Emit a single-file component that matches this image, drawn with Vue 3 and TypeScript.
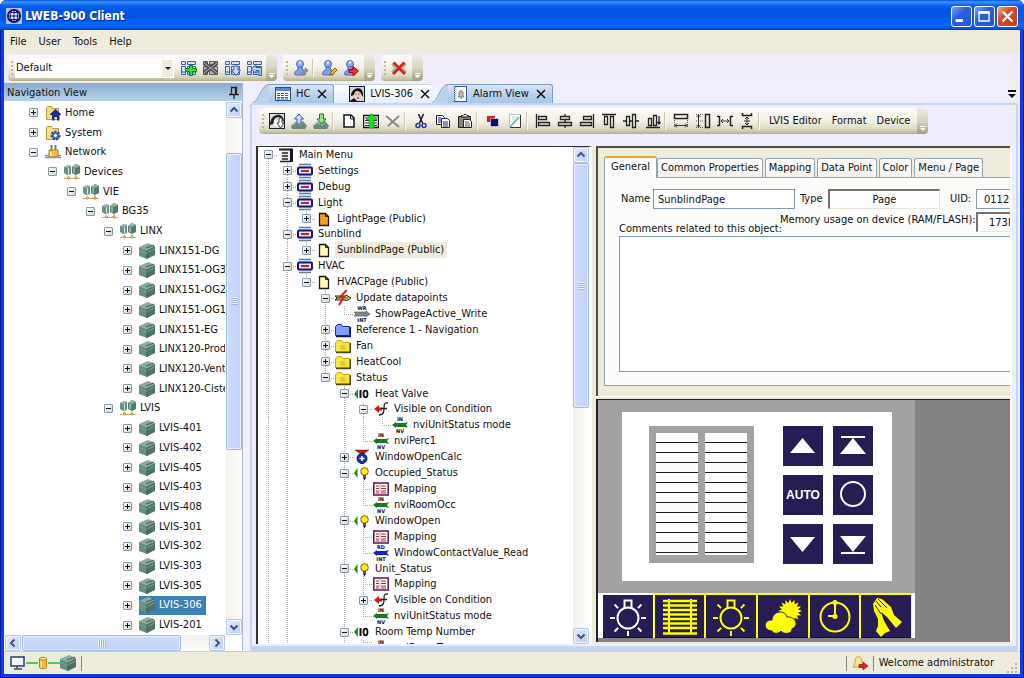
<script setup lang="ts">
interface TreeItem {
  level: number
  label: string
  icon: string
  open?: boolean
  leaf?: boolean
  selected?: boolean
}

interface Guide {
  top: boolean
  bottom: boolean
}

const menus: string[] = ['File', 'User', 'Tools', 'Help']

const layoutTools: string[][] = [
  ['grid-add', 'Add layout'],
  ['grid-del', 'Delete layout'],
  ['grid-down', 'Save layout'],
  ['grid-undo', 'Reset layout'],
]

const editorTools: string[][][] = [
  [['face-down', 'Load project'], ['upload', 'Upload'], ['download', 'Download']],
  [['page', 'New'], ['page-up', 'Insert'], ['cross-grey', 'Delete']],
  [['cut', 'Cut'], ['copy', 'Copy'], ['paste', 'Paste']],
  [['order', 'Order'], ['sheet', 'Sheet']],
  [
    ['al-left', 'Align left'], ['al-center', 'Align center'], ['al-right', 'Align right'],
    ['al-top', 'Align top'], ['al-middle', 'Align middle'], ['al-bottom', 'Align bottom'],
  ],
  [['same-w', 'Same width'], ['same-h', 'Same height'], ['space-h', 'Space across'], ['space-v', 'Space down']],
]

const editorMenus: string[] = ['LVIS Editor', 'Format', 'Device']

const dev = (label: string, selected = false): TreeItem => ({ level: 5, label, icon: 'cube', selected })

const navItems: TreeItem[] = [
  { level: 0, label: 'Home', icon: 'home' },
  { level: 0, label: 'System', icon: 'system' },
  { level: 0, label: 'Network', icon: 'network', open: true },
  { level: 1, label: 'Devices', icon: 'group', open: true },
  { level: 2, label: 'VIE', icon: 'group', open: true },
  { level: 3, label: 'BG35', icon: 'group', open: true },
  { level: 4, label: 'LINX', icon: 'group', open: true },
  dev('LINX151-DG'), dev('LINX151-OG3'), dev('LINX151-OG2'), dev('LINX151-OG1'), dev('LINX151-EG'),
  dev('LINX120-Production'), dev('LINX120-Ventilation'), dev('LINX120-Cistern'),
  { level: 4, label: 'LVIS', icon: 'group', open: true },
  dev('LVIS-401'), dev('LVIS-402'), dev('LVIS-405'), dev('LVIS-403'), dev('LVIS-408'),
  dev('LVIS-301'), dev('LVIS-302'), dev('LVIS-303'), dev('LVIS-305'), dev('LVIS-306', true), dev('LVIS-201'),
]

const projectItems: TreeItem[] = [
  { level: 0, label: 'Main Menu', icon: 'mainmenu', open: true },
  { level: 1, label: 'Settings', icon: 'menu' },
  { level: 1, label: 'Debug', icon: 'menu' },
  { level: 1, label: 'Light', icon: 'menu', open: true },
  { level: 2, label: 'LightPage (Public)', icon: 'page-orange' },
  { level: 1, label: 'Sunblind', icon: 'menu', open: true },
  { level: 2, label: 'SunblindPage (Public)', icon: 'page-yellow', selected: true },
  { level: 1, label: 'HVAC', icon: 'menu', open: true },
  { level: 2, label: 'HVACPage (Public)', icon: 'page-yellow', open: true },
  { level: 3, label: 'Update datapoints', icon: 'update', open: true },
  { level: 4, label: 'ShowPageActive_Write', icon: 'wr', leaf: true },
  { level: 3, label: 'Reference 1 - Navigation', icon: 'folder-blue' },
  { level: 3, label: 'Fan', icon: 'folder' },
  { level: 3, label: 'HeatCool', icon: 'folder' },
  { level: 3, label: 'Status', icon: 'folder', open: true },
  { level: 4, label: 'Heat Valve', icon: 'io', open: true },
  { level: 5, label: 'Visible on Condition', icon: 'cond', open: true },
  { level: 6, label: 'nviUnitStatus mode', icon: 'nv', leaf: true },
  { level: 5, label: 'nviPerc1', icon: 'nv', leaf: true },
  { level: 4, label: 'WindowOpenCalc', icon: 'calc' },
  { level: 4, label: 'Occupied_Status', icon: 'bulb', open: true },
  { level: 5, label: 'Mapping', icon: 'map', leaf: true },
  { level: 5, label: 'nviRoomOcc', icon: 'nv', leaf: true },
  { level: 4, label: 'WindowOpen', icon: 'bulb', open: true },
  { level: 5, label: 'Mapping', icon: 'map', leaf: true },
  { level: 5, label: 'WindowContactValue_Read', icon: 'rd', leaf: true },
  { level: 4, label: 'Unit_Status', icon: 'bulb', open: true },
  { level: 5, label: 'Mapping', icon: 'map', leaf: true },
  { level: 5, label: 'Visible on Condition', icon: 'cond' },
  { level: 5, label: 'nviUnitStatus mode', icon: 'nv', leaf: true },
  { level: 4, label: 'Room Temp Number', icon: 'io', open: true },
  { level: 5, label: 'nviRoomTemp', icon: 'nv', leaf: true },
]

// Levels whose branch goes on below the last loaded row.
const openEnded = [0, 1, 4, 5]

function continues(row: number, level: number): boolean {
  for (let i = row + 1; i < projectItems.length; i++) {
    if (projectItems[i].level === level) return true
    if (projectItems[i].level < level) return false
  }
  return openEnded.includes(level)
}

const projectRows = projectItems.map((item, row) => {
  const guides: Guide[] = []
  for (let level = 0; level <= item.level; level++) {
    const on = continues(row, level)
    guides.push(level === item.level ? { top: row > 0, bottom: on } : { top: on, bottom: on })
  }
  return { ...item, guides }
})

const pageTabs: string[] = ['General', 'Common Properties', 'Mapping', 'Data Point', 'Color', 'Menu / Page']
const keys: string[] = ['up', 'top', 'auto', 'circle', 'down', 'bottom']
const modes: string[] = ['lamp', 'blinds', 'lamp', 'weather', 'clock', 'hands']
const slats = Array.from({ length: 12 }, (_, i) => 16 + i * 10)
const rays = [45, 135, 225, 315]
const sunRays = Array.from({ length: 16 }, (_, i) => i * 22.5)
</script>

<template>
  <div class="window">
    <svg class="defs" aria-hidden="true">
      <symbol id="globe" viewBox="0 0 16 16"><rect width="16" height="16" fill="#b9b9d8" /><circle cx="8" cy="8" r="6" fill="#fff" stroke="#10107e" stroke-width="2" /><path d="M8 1v14M1 8h14M2.500 4.500h11M2.500 11.500h11" stroke="#10107e" /><ellipse cx="8" cy="8" rx="3.500" ry="6.500" fill="none" stroke="#10107e" /></symbol>
      <symbol id="grid" viewBox="0 0 16 16"><path d="M.5 1.500h4v3h-4zM6.500 1.500h8v3h-8zM.5 6.500h4v8h-4zM6.500 6.500h8v8h-8z" fill="#d5e3fa" stroke="#3d5fa8" /><path d="M1 12h3M7 12h7" stroke="#7b98d4" stroke-width="2" /></symbol>
      <symbol id="grid-add" viewBox="0 0 16 16"><use href="#grid" /><path d="M8.500 5.500h3v3h4v3h-4v4h-3v-4h-4v-3h4z" fill="#37dc37" stroke="#0b7d13" /></symbol>
      <symbol id="grid-del" viewBox="0 0 16 16"><path d="M.5 1.500h4v3h-4zM6.500 1.500h8v3h-8zM.5 6.500h4v8h-4zM6.500 6.500h8v8h-8z" fill="#bbb" stroke="#555" /><path d="M1 3l13 10M14 3L1 13" stroke="#444" stroke-width="4" /><path d="M1 3l13 10M14 3L1 13" stroke="#999" stroke-width="1.500" /></symbol>
      <symbol id="grid-down" viewBox="0 0 16 16"><use href="#grid" /><path d="M9 6h4v4h2.500L11 15.500 6.500 10H9z" fill="#c5d9ff" stroke="#3d5fa8" /></symbol>
      <symbol id="grid-undo" viewBox="0 0 16 16"><use href="#grid" /><path d="M4.500 9L9 5v2.500h5.500v8H12v-5H9v3z" fill="#b8cefa" stroke="#3d5fa8" /></symbol>
      <symbol id="person" viewBox="0 0 16 16"><circle cx="7" cy="4" r="3.500" fill="#8eacf0" stroke="#4a68b8" /><path d="M5 7h4l1 3c3 1 3 3 2 5H2c-1-3 0-4 3-5z" fill="#7f9fe8" stroke="#4a68b8" /><path d="M6 3l2-1" stroke="#dfe8ff" stroke-width="2" /></symbol>
      <symbol id="person-tool" viewBox="0 0 16 16"><use href="#person" /><path d="M8 15l6-6M12 8l1 2 2 1M8 13l2 2" stroke="#858c98" stroke-width="2" fill="none" /></symbol>
      <symbol id="person-edit" viewBox="0 0 16 16"><use href="#person" /><path d="M9 15l1-3 4-4 2 2-4 4z" fill="#f3c43d" stroke="#7b5b10" /></symbol>
      <symbol id="person-out" viewBox="0 0 16 16"><use href="#person" /><path d="M6 9.500h4v-3l5.500 4.500L10 15.500v-3H6z" fill="#f23329" stroke="#a40000" /></symbol>
      <symbol id="alarm-x" viewBox="0 0 16 16"><path d="M1 4l3 4-3 4M15 4l-3 4 3 4" stroke="#8ccf8c" stroke-width="2" fill="none" /><path d="M2.500 2.500L14 14M13.500 2.500L2 14" stroke="#e0201b" stroke-width="3" /></symbol>
      <symbol id="face" viewBox="0 0 16 16"><rect x=".5" y=".5" width="15" height="15" fill="#cfd8e0" stroke="#14143c" /><path d="M2 10C2 1 14-1 14 8v3l-3-5-4-1-2 4z" fill="#120c0c" /><path d="M5 8l2-3 4 1 1 4-2 4H8l-3-3z" fill="#f2cdb6" /><path d="M6.500 8h1M9.500 8h1M8 12h2" stroke="#6b2020" /><path d="M1 15l4-3 3 3z" fill="#181414" /></symbol>
      <symbol id="face-down" viewBox="0 0 16 16"><rect x=".5" y=".5" width="15" height="15" fill="#ddd" stroke="#222" /><path d="M1 12C1 0 15-2 15 9l-5-5-4 1-2 6z" fill="#222" /><path d="M5 7h5v6H6z" fill="#fff" /><path d="M10 5h3v5h2l-3.500 5L8 10h2z" fill="#fff" stroke="#444" /></symbol>
      <symbol id="hill" viewBox="0 0 16 16"><path d="M0 13l4-4 5 1 3-2 4 5-2 3H1z" fill="#68877f" /><path d="M1 12l4-2 4 2 3-2" stroke="#a9c4bb" fill="none" /></symbol>
      <symbol id="upload" viewBox="0 0 16 16"><use href="#hill" /><path d="M6 11V6H3.500L8 1l4.500 5H10v5z" fill="#c9dcff" stroke="#3158ad" /></symbol>
      <symbol id="download" viewBox="0 0 16 16"><use href="#hill" /><path d="M6.500 1v5H4l4.500 5L13 6h-2.500V1z" fill="#8de67e" stroke="#137a17" /></symbol>
      <symbol id="page" viewBox="0 0 16 16"><path d="M3 2h7l3 3v9H3z" fill="#fff" stroke="#111" stroke-width="1.500" /><path d="M9.500 2v4H13" fill="none" stroke="#111" /></symbol>
      <symbol id="page-up" viewBox="0 0 16 16"><path d="M.5 2.500h15v12H.5z" fill="#fff" stroke="#111" stroke-width="1.500" /><path d="M2 5h12M2 7.500h12M2 10h12M2 12.500h12" stroke="#333" /><path d="M6 15V7H3L8.500.5 14 7h-3v8z" fill="#0fe31b" stroke="#067b0b" stroke-width=".5" /></symbol>
      <symbol id="cross-grey" viewBox="0 0 16 16"><path d="M1 3l13 11M14 3L3 13" stroke="#8d8d86" stroke-width="2" fill="none" /></symbol>
      <symbol id="cut" viewBox="0 0 16 16"><path d="M5.500 1l4 9M10.500 1l-4 9" stroke="#15152e" stroke-width="1.500" /><circle cx="5" cy="12.500" r="2" fill="none" stroke="#2a35a8" stroke-width="1.500" /><circle cx="11" cy="12.500" r="2" fill="none" stroke="#2a35a8" stroke-width="1.500" /></symbol>
      <symbol id="copy" viewBox="0 0 16 16"><path d="M1.500 2.500h6l2 2v7h-8z" fill="#fff" stroke="#222" /><path d="M6.500 5.500h6l2 2v7h-8z" fill="#fff" stroke="#1d1d84" /><path d="M3 5h3M3 7h3M3 9h3M8 9h5M8 11h5M8 13h5" stroke="#1d1d84" /></symbol>
      <symbol id="paste" viewBox="0 0 16 16"><path d="M1.500 3.500h12v11h-12z" fill="#85857a" stroke="#222" /><path d="M4.500 4V2.500H6l1-1h2l1 1h1.500V4z" fill="#eee" stroke="#222" /><path d="M6.500 6.500h6l2 2v6h-8z" fill="#fff" stroke="#222" /><path d="M8 9h4M8 11h5M8 13h5" stroke="#555" /></symbol>
      <symbol id="order" viewBox="0 0 16 16"><path d="M2 3h8v6H2z" fill="#d21b1b" /><path d="M5.500 5.500h8v8h-8z" fill="#0a0a70" stroke="#fff" stroke-width=".5" /></symbol>
      <symbol id="sheet" viewBox="0 0 16 16"><path d="M2.500 1.500h11v13h-11z" fill="#fdfdf6" stroke="#b8c4c0" /><path d="M13.500 2v12.500H3" fill="none" stroke="#333" /><path d="M3 14L12 4" stroke="#55b8a8" stroke-width="1.500" /><path d="M5 4h5M5 6h3" stroke="#b5d8d0" /></symbol>
      <symbol id="al-left" viewBox="0 0 16 16"><path d="M1.500 1v14M3.500 3.500h8v3h-8zM3.500 9.500h11v3h-11z" fill="none" stroke="#222" stroke-width="1.300" /></symbol>
      <symbol id="al-center" viewBox="0 0 16 16"><path d="M8 1v2M8 7v2M8 13v2M3.500 3.500h9v3h-9zM1.500 9.500h13v3h-13z" fill="none" stroke="#222" stroke-width="1.300" /></symbol>
      <symbol id="al-right" viewBox="0 0 16 16"><path d="M14.500 1v14M4.500 3.500h8v3h-8zM1.500 9.500h11v3h-11z" fill="none" stroke="#222" stroke-width="1.300" /></symbol>
      <symbol id="al-top" viewBox="0 0 16 16"><path d="M1 1.500h14M3.500 3.500h3v8h-3zM9.500 3.500h3v11h-3z" fill="none" stroke="#222" stroke-width="1.300" /></symbol>
      <symbol id="al-middle" viewBox="0 0 16 16"><path d="M0 8h3M7 8h2M13 8h3M3.500 3.500h3v9h-3zM9.500 1.500h3v13h-3z" fill="none" stroke="#222" stroke-width="1.300" /></symbol>
      <symbol id="al-bottom" viewBox="0 0 16 16"><path d="M1 14.500h14M3.500 5.500h3v7h-3zM8.500 2.500h3v10h-3zM14 3v8M12.500 9l1.500 2 1.500-2" fill="none" stroke="#222" stroke-width="1.300" /></symbol>
      <symbol id="same-w" viewBox="0 0 16 16"><path d="M1.500 1.500h13v4h-13z" fill="none" stroke="#222" stroke-width="1.500" /><path d="M1.500 7v7M14.500 7v7" stroke="#555" stroke-dasharray="1 1" /><path d="M2 12.500h12M4 10.500l-2 2 2 2M12 10.500l2 2-2 2" stroke="#333" fill="none" /></symbol>
      <symbol id="same-h" viewBox="0 0 16 16"><path d="M10.500 1.500h4v13h-4z" fill="none" stroke="#222" stroke-width="1.500" /><path d="M1 1.500h8M1 14.500h8M1 8h7" stroke="#555" stroke-dasharray="1 1" /><path d="M3.500 2v12M1.500 4l2-2 2 2M1.500 12l2 2 2-2" stroke="#333" fill="none" /></symbol>
      <symbol id="space-h" viewBox="0 0 16 16"><path d="M0 3.500h2.500v9H0M16 3.500h-2.500v9H16" stroke="#222" stroke-width="1.500" fill="none" /><path d="M4 8h8M6 6L4 8l2 2M10 6l2 2-2 2" stroke="#333" fill="none" /></symbol>
      <symbol id="space-v" viewBox="0 0 16 16"><path d="M3.500 0v2.500h9V0M3.500 16v-2.500h9V16" stroke="#222" stroke-width="1.500" fill="none" /><path d="M8 4v8M6 6l2-2 2 2M6 10l2 2 2-2M5 8h6" stroke="#333" fill="none" /></symbol>
      <symbol id="table" viewBox="0 0 16 16"><rect x=".5" y="1.500" width="15" height="13" fill="#fff" stroke="#2b4a9b" /><path d="M1 2h14v3H1z" fill="#5b86dd" /><path d="M2 7.500h12M2 9.500h12M2 11.500h12M2 13h12" stroke="#3a54a0" stroke-dasharray="3 1" /></symbol>
      <symbol id="alarm" viewBox="0 0 16 16"><rect x="2.500" y=".5" width="12" height="15" fill="#f5f8ff" stroke="#3b5a9c" /><path d="M3 1v14" stroke="#e6b944" stroke-width="3" stroke-dasharray="1 1" /><path d="M6 11c1-1 1-2 1-4 0-3 4-3 4 0 0 2 0 3 1 4zM8 12h2" fill="#c3b7ae" stroke="#8b7b74" /></symbol>
      <symbol id="pin" viewBox="0 0 16 16"><path d="M5.500 9.500v-7h5v7M3 9.500h10M8 10v4M9.500 3v6" fill="none" stroke="#222" stroke-width="1.300" /></symbol>
      <symbol id="home" viewBox="0 0 16 16"><path d="M1.500 14.500v-12l1-1h4l1 2h6v11z" fill="#f5e07f" stroke="#b99b3b" /><path d="M5 9l5.500-5L16 9v1h-1.500v5.500H12V12H9.500v3.500H7V10H5z" fill="#1f2f86" /></symbol>
      <symbol id="system" viewBox="0 0 16 16"><path d="M1.500 14.500v-12l1-1h4l1 2h6v11z" fill="#f5e07f" stroke="#b99b3b" /><circle cx="10.500" cy="10.500" r="3.500" fill="#7d9ae8" stroke="#2c49a8" stroke-width="3" stroke-dasharray="2 1" /><circle cx="10.500" cy="10.500" r="2" fill="#fff" stroke="#3858b8" /></symbol>
      <symbol id="network" viewBox="0 0 16 16"><path d="M6.500 1v6M10.500 1v6" stroke="#7a7d88" stroke-width="2" /><path d="M4 6h9v7H4z" fill="#f5bf3c" stroke="#a97716" /><path d="M0 11.500h4M13 11.500h3M0 13.500h16" stroke="#8792a5" stroke-width="1.500" /><path d="M6 8v4" stroke="#ffeb9d" stroke-width="2" /></symbol>
      <symbol id="cube" viewBox="0 0 16 16"><path d="M0 4l9-4 7 3-8 4z" fill="#8aa99f" /><path d="M8 7l8-4v9l-8 4z" fill="#4f7367" /><path d="M0 4l8 3v9l-8-3z" fill="#668d81" /><path d="M7 5l8-3M8 8v8" stroke="#3b5b51" /><path d="M8.500 9.500l7-3.500" stroke="#7d9f94" /><path d="M0 7.500l8 3" stroke="#7b9f93" /></symbol>
      <symbol id="group" viewBox="0 0 16 16"><path d="M0 3l4-2 3 1v8l-4 1-3-2z" fill="#6a9284" /><path d="M0 3l4-2 3 1-4 2z" fill="#a0beb3" /><path d="M8 3l4-3 4 2v7l-4 2-4-2z" fill="#507a6c" /><path d="M8 3l4-3 4 2-4 2z" fill="#8fb1a6" /><path d="M4.500 4v6M10 4v5" stroke="#cfe5dc" /><path d="M0 14.500h16M4.500 12v3M12 11v4" stroke="#c8a86c" /><circle cx="4.500" cy="14" r="1.200" fill="#f4dc95" stroke="#b98f47" /><circle cx="12" cy="14" r="1.200" fill="#f4dc95" stroke="#b98f47" /></symbol>
      <symbol id="mainmenu" viewBox="0 0 16 16"><path d="M3 1h9v13H3z" fill="#ececec" /><path d="M1 2.500h14" stroke="#222" stroke-width="2" /><path d="M4 6h6M4 9h6M4 12h6M2 14.500h10" stroke="#222" stroke-width="1.500" /><path d="M12 3h3v12h-3z" fill="#14142f" /></symbol>
      <symbol id="menu" viewBox="0 0 16 16"><path d="M2 0h12v16H2z" fill="#c9d8ee" /><path d="M2 1.500h12M2 14.500h12" stroke="#777b85" /><rect x="1" y="4.500" width="14" height="7" rx="1" fill="#e4e6f8" stroke="#18186e" stroke-width="2" /><path d="M4 8h8" stroke="#cf1c1c" stroke-width="2" /></symbol>
      <symbol id="page-orange" viewBox="0 0 16 16"><path d="M3.500 2.500h6l3 3v9h-9z" fill="#ff9c1a" stroke="#221100" stroke-width="1.300" /><path d="M9.500 2.500v3h3" fill="none" stroke="#221100" /></symbol>
      <symbol id="page-yellow" viewBox="0 0 16 16"><path d="M3.500 2.500h6l3 3v9h-9z" fill="#fdf9b0" stroke="#1a1a1a" stroke-width="1.300" /><path d="M9.500 2.500v3h3" fill="none" stroke="#1a1a1a" /></symbol>
      <symbol id="update" viewBox="0 0 16 16"><path d="M0 6l2 2-2 2h11v1l5-3-5-3v1z" fill="#d6e22c" stroke="#222" /><path d="M2 8h11" stroke="#555" /><path d="M12 0L5 7h4l-5 8" fill="none" stroke="#dc1c1c" stroke-width="2" /></symbol>
      <symbol id="arrow-in" viewBox="0 0 16 16"><path d="M0 8l4-3v1h9l3-1-2 3 2 3-3-1H4v1z" /></symbol>
      <symbol id="nv" viewBox="0 0 16 16" overflow="visible"><use href="#arrow-in" fill="#157a1d" /><text x="8" y="4" class="tiny">IN</text><text x="8" y="16" class="tiny">NV</text></symbol>
      <symbol id="rd" viewBox="0 0 16 16" overflow="visible"><use href="#arrow-in" fill="#1c1cc4" /><text x="8" y="4" class="tiny">RD</text><text x="8" y="16" class="tiny">INT</text></symbol>
      <symbol id="wr" viewBox="0 0 16 16" overflow="visible"><path d="M0 6l2 2-2 2h12v1l4-3-4-3v1z" fill="#85888a" stroke="#333" stroke-width=".5" /><text x="8" y="4" class="tiny">WR</text><text x="8" y="16" class="tiny">INT</text></symbol>
      <symbol id="folder-blue" viewBox="0 0 16 16"><path d="M.5 13.500v-9l2-2h4l1 2h7v9z" fill="#7aa2fb" stroke="#2626a2" /><path d="M1 14.500h14.500V5" stroke="#14145e" fill="none" stroke-width="1.500" /></symbol>
      <symbol id="folder" viewBox="0 0 16 16"><path d="M.5 13.500v-9l2-2h4l1 2h7v9z" fill="#f7e448" stroke="#c1aa00" /><circle cx="8" cy="9.500" r="3" fill="#f2c83a" /><path d="M1 14.500h14.500V5" stroke="#4c4400" fill="none" stroke-width="1.500" /></symbol>
      <symbol id="io" viewBox="0 0 16 16"><path d="M4 3v10L0 8z" fill="#1f8a2a" /><path d="M6.500 4v8" stroke="#111" stroke-width="2" /><ellipse cx="11.500" cy="8" rx="2" ry="3.300" fill="none" stroke="#111" stroke-width="1.800" /></symbol>
      <symbol id="bulb" viewBox="0 0 16 16"><path d="M3.500 3v10L0 8z" fill="#1f8a2a" /><circle cx="10.500" cy="6.500" r="3.800" fill="#ffee16" stroke="#6e6200" /><path d="M9 11h3M9 13h3M10 14.500h1" stroke="#222" stroke-width="1.500" /></symbol>
      <symbol id="cond" viewBox="0 0 16 16"><path d="M1 8l5-4v2.500h3v3H6V12z" fill="#dc1111" /><path d="M15 2c-4-1-4 2-4 5s0 7-5 7M8 7.500h6" fill="none" stroke="#222" stroke-width="1.300" /></symbol>
      <symbol id="calc" viewBox="0 0 16 16"><path d="M1 1h14l-7 5z" fill="#c61818" stroke="#333" stroke-width=".5" /><circle cx="8" cy="9.500" r="5" fill="#1630ba" stroke="#0c0c5a" /><path d="M5.500 9.500h5M8 7v5" stroke="#fff" stroke-width="1.500" /></symbol>
      <symbol id="map" viewBox="0 0 16 16"><rect x=".8" y="2" width="14.400" height="12" fill="#fff" stroke="#5a1450" stroke-width="1.500" /><path d="M3 5h3M3 7.500h3M3 10h3M3 12h3M8 5h5M8 7.500h5M8 10h5M8 12h5" stroke="#b52234" /><path d="M7 3v10" stroke="#bbb" /></symbol>
      <symbol id="monitor" viewBox="0 0 16 16"><rect x="1" y="2" width="13" height="9" fill="#f4f8ff" stroke="#2a3a8c" stroke-width="1.500" /><path d="M7 11v2M4 14h8" stroke="#444" stroke-width="1.500" /></symbol>
      <symbol id="db" viewBox="0 0 10 16"><path d="M1 3v10c0 2 8 2 8 0V3z" fill="#f0bf31" stroke="#a77a12" /><ellipse cx="5" cy="3" rx="4" ry="1.500" fill="#fff0a6" stroke="#a77a12" /><path d="M3 6v7" stroke="#fff2b5" stroke-width="1.500" /></symbol>
      <symbol id="bell-out" viewBox="0 0 16 16"><path d="M1 12c2-2 2-4 2-6 0-6 7-6 7 0 0 2 0 4 2 6z" fill="#f8e49a" stroke="#c9a439" /><path d="M7 9.500h4V7l5 4-5 4v-2.500H7z" fill="#ee2020" stroke="#920000" stroke-width=".6" /></symbol>
      <symbol id="chev" viewBox="0 0 10 10"><path d="M1.500 6.500L5 3l3.500 3.500" fill="none" stroke="#3c5480" stroke-width="2" /></symbol>
    </svg>

    <header class="titlebar">
      <svg class="i16"><use href="#globe" /></svg>
      <h1>LWEB-900 Client</h1>
      <button class="cap-btn" aria-label="Minimize"><svg viewBox="0 0 21 21"><path d="M4 15h8" stroke="#fff" stroke-width="3" /></svg></button>
      <button class="cap-btn" aria-label="Maximize"><svg viewBox="0 0 21 21"><path d="M4.500 5.500h11v10h-11z" fill="none" stroke="#fff" stroke-width="1.500" /><path d="M4 6h12" stroke="#fff" stroke-width="3" /></svg></button>
      <button class="cap-btn close" aria-label="Close"><svg viewBox="0 0 21 21"><path d="M5 5l11 11M16 5L5 16" stroke="#fff" stroke-width="2.500" /></svg></button>
    </header>

    <div class="client">
      <nav class="menubar">
        <button v-for="m in menus" :key="m">{{ m }}</button>
      </nav>

      <div class="toolbars">
        <div class="toolbar layout-bar">
          <span class="grip"></span>
          <div class="combo">
            <select aria-label="Layout"><option>Default</option></select>
            <span class="combo-arrow"></span>
          </div>
          <button v-for="t in layoutTools" :key="t[0]" class="tool" :aria-label="t[1]"><svg class="i16"><use :href="'#' + t[0]" /></svg></button>
          <span class="cap"></span>
        </div>
        <div class="toolbar">
          <span class="grip"></span>
          <button class="tool" aria-label="User settings"><svg class="i16"><use href="#person-tool" /></svg></button>
          <span class="sep"></span>
          <button class="tool" aria-label="Edit user"><svg class="i16"><use href="#person-edit" /></svg></button>
          <button class="tool" aria-label="Log out"><svg class="i16"><use href="#person-out" /></svg></button>
          <span class="cap"></span>
        </div>
        <div class="toolbar">
          <span class="grip"></span>
          <button class="tool" aria-label="Disconnect"><svg class="i16"><use href="#alarm-x" /></svg></button>
          <span class="cap"></span>
        </div>
      </div>

      <main class="main">
        <aside class="nav">
          <div class="nav-head"><h2>Navigation View</h2><button aria-label="Pin"><svg class="i16"><use href="#pin" /></svg></button></div>
          <div class="nav-body">
            <ul class="nav-tree">
              <li v-for="n in navItems" :key="n.label" :class="'lv' + n.level">
                <button class="exp" :aria-label="n.open ? 'Collapse' : 'Expand'"><i></i><i v-if="!n.open" class="vert"></i></button>
                <span class="nav-item" :class="{ sel: n.selected }"><svg class="i16"><use :href="'#' + n.icon" /></svg><span class="nav-label">{{ n.label }}</span></span>
              </li>
            </ul>
            <div class="vbar">
              <button aria-label="Scroll up"><svg><use href="#chev" /></svg></button>
              <span class="gap-a"></span><span class="thumb thumb-a"></span><span class="gap-b"></span>
              <button class="flip" aria-label="Scroll down"><svg><use href="#chev" /></svg></button>
            </div>
          </div>
          <div class="hbar">
            <button class="turn-left" aria-label="Scroll left"><svg><use href="#chev" /></svg></button>
            <span class="thumb"></span><span class="gap-h"></span>
            <button class="turn-right" aria-label="Scroll right"><svg><use href="#chev" /></svg></button>
          </div>
        </aside>

        <section class="docs">
          <div class="doc-tabs">
            <button class="doc-tab">
              <svg class="slant" viewBox="0 0 16 19"><path d="M0 19C6 19 9 .5 16 .5V19z" fill="#bcd2ec" /><path d="M0 18.500C6 18 8 .5 16 .5" fill="none" stroke="#7f9cc0" /></svg>
              <span class="doc-face hc"><svg class="i16"><use href="#table" /></svg><span>HC</span><svg class="x" viewBox="0 0 10 10"><path d="M1 1l8 8M9 1L1 9" /></svg></span>
            </button>
            <button class="doc-tab active">
              <span class="doc-face lv"><svg class="i16"><use href="#face" /></svg><span>LVIS-306</span><svg class="x" viewBox="0 0 10 10"><path d="M1 1l8 8M9 1L1 9" /></svg></span>
            </button>
            <button class="doc-tab">
              <svg class="slant on-active" viewBox="0 0 16 19"><path d="M0 19C6 19 9 .5 16 .5V19z" fill="#bcd2ec" /><path d="M0 18.500C6 18 8 .5 16 .5" fill="none" stroke="#7f9cc0" /></svg>
              <span class="doc-face av"><svg class="i16"><use href="#alarm" /></svg><span>Alarm View</span><svg class="x" viewBox="0 0 10 10"><path d="M1 1l8 8M9 1L1 9" /></svg></span>
            </button>
            <button class="tab-list" aria-label="Tab list"><svg viewBox="0 0 8 8"><path d="M0 1h8" stroke="#111" stroke-width="2" /><path d="M0 4h8L4 8z" fill="#111" /></svg></button>
          </div>

          <div class="frame">
            <div class="toolbar editor-bar">
              <span class="grip"></span>
              <template v-for="(g, gi) in editorTools" :key="gi">
                <button v-for="t in g" :key="t[0]" class="tool" :aria-label="t[1]"><svg class="i16"><use :href="'#' + t[0]" /></svg></button>
                <span class="sep"></span>
              </template>
              <button v-for="m in editorMenus" :key="m" class="text-tool">{{ m }}</button>
              <span class="cap"></span>
            </div>

            <div class="split">
              <div class="project">
                <ul class="project-tree">
                  <li v-for="(r, ri) in projectRows" :key="ri">
                    <span v-for="(g, k) in r.guides" :key="k" class="guide" :class="{ gt: g.top, gb: g.bottom, gh: k === r.level }">
                      <button v-if="k === r.level && !r.leaf" class="exp" :aria-label="r.open ? 'Collapse' : 'Expand'"><i></i><i v-if="!r.open" class="vert"></i></button>
                    </span>
                    <svg class="i16 node-icon"><use :href="'#' + r.icon" /></svg>
                    <span class="project-label" :class="{ sel: r.selected }">{{ r.label }}</span>
                  </li>
                </ul>
                <div class="vbar">
                  <button aria-label="Scroll up"><svg><use href="#chev" /></svg></button>
                  <span class="thumb thumb-p"></span><span class="gap-p"></span>
                  <button class="flip" aria-label="Scroll down"><svg><use href="#chev" /></svg></button>
                </div>
              </div>

              <div class="workspace">
                <div class="props">
                  <div class="page-tabs">
                    <button v-for="(t, ti) in pageTabs" :key="t" :class="{ on: ti === 0 }">{{ t }}</button>
                  </div>
                  <div class="page-body">
                    <div class="line">
                      <label class="l-name" for="f-name">Name</label><input id="f-name" class="f-name" value="SunblindPage">
                      <label class="l-type" for="f-type">Type</label><input id="f-type" class="f-type sunk" value="Page" readonly>
                      <label class="l-uid" for="f-uid">UID:</label><input id="f-uid" class="f-cut" value="011200">
                    </div>
                    <div class="line second">
                      <label class="l-com" for="f-com">Comments related to this object:</label>
                      <label class="l-mem" for="f-mem">Memory usage on device (RAM/FLASH):</label><input id="f-mem" class="f-cut sunk mem" value="173kB" readonly>
                    </div>
                    <textarea id="f-com"></textarea>
                  </div>
                </div>

                <div class="preview">
                  <div class="device">
                    <div class="screen">
                      <svg class="blind" viewBox="0 0 105 137">
                        <rect width="105" height="137" fill="#a2a2a2" />
                        <path d="M7 7h42v122H7zM56 7h42v122H56z" fill="#fdfcfa" />
                        <path v-for="y in slats" :key="y" :d="`M7 ${y + 0.5}h42M56 ${y + 0.5}h42`" stroke="#1c1c1c" />
                      </svg>
                      <div class="keys">
                        <button v-for="k in keys" :key="k" :aria-label="k">
                          <span v-if="k === 'auto'">AUTO</span>
                          <svg v-else viewBox="0 0 40 40">
                            <path v-if="k === 'up'" d="M7 27h25L19.500 12z" fill="#fff" />
                            <path v-if="k === 'down'" d="M7 13h25L19.500 28z" fill="#fff" />
                            <g v-if="k === 'top'"><path d="M7 28h26L20 12z" fill="#fff" /><path d="M8 11h24" stroke="#fff" stroke-width="2" /></g>
                            <g v-if="k === 'bottom'"><path d="M7 12h26L20 28z" fill="#fff" /><path d="M8 29h24" stroke="#fff" stroke-width="2" /></g>
                            <circle v-if="k === 'circle'" cx="20" cy="19" r="12" fill="none" stroke="#fff" stroke-width="2" />
                          </svg>
                        </button>
                      </div>
                    </div>
                    <div class="modes">
                      <button v-for="(m, mi) in modes" :key="mi" :class="{ first: mi === 0 }" :aria-label="m">
                        <svg viewBox="0 0 48 42">
                          <g v-if="m === 'lamp'" fill="none" stroke="currentColor" stroke-width="2">
                            <circle cx="24" cy="22" r="10.500" /><path d="M20.500 12V4.500h7V12" />
                            <path v-for="a in rays" :key="a" d="M24 8V3" :transform="`rotate(${a} 24 22)`" />
                            <path d="M11 22H6M37 22h5M24 35v5" />
                          </g>
                          <g v-if="m === 'blinds'" stroke="currentColor">
                            <path d="M7 5h34M7 9.500h34M7 14h34M7 18.500h34M7 23h34M7 27.500h34M7 32h34M7 37.500h34" stroke-width="2.500" /><path d="M13 3v35M35 3v35" stroke-width="2" />
                          </g>
                          <g v-if="m === 'weather'" fill="currentColor">
                            <circle cx="31" cy="15" r="8" /><path v-for="a in sunRays" :key="a" d="M29 8l2-5 2 5z" :transform="`rotate(${a} 31 15)`" />
                            <path d="M13 35c-10-1-8-12 0-11 0-9 13-11 15-3 8-1 13 8 5 12 0 6-10 5-11 2-2 3-8 3-9 0z" stroke="#271c54" />
                          </g>
                          <g v-if="m === 'clock'" fill="none" stroke="currentColor" stroke-width="2">
                            <circle cx="24" cy="21" r="14.500" /><path d="M24 6v14h-7" /><circle cx="24" cy="6.500" r="1.500" fill="currentColor" /><circle cx="24" cy="20.500" r="1.500" fill="currentColor" />
                          </g>
                          <g v-if="m === 'hands'">
                            <path d="M11 8l4-6 5 1 9 8 3 8 8 7-6 6-9-11-6-5 3 9 6 10-5 2-4 4-5-6 2-5v-7l-4-8z" fill="currentColor" />
                            <path d="M14 5l5 6M16 3l9 9M13 9l6 9" stroke="#271c54" />
                          </g>
                        </svg>
                      </button>
                    </div>
                  </div>
                </div>
              </div>
            </div>
          </div>
        </section>
      </main>

      <footer class="status">
        <svg class="i16"><use href="#monitor" /></svg><span class="link"></span><svg class="db"><use href="#db" /></svg><span class="link"></span><svg class="i16"><use href="#cube" /></svg>
        <span class="bar"></span>
        <span class="bar push"></span><svg class="i16"><use href="#bell-out" /></svg><span class="bar"></span>
        <span class="welcome">Welcome administrator</span>
        <svg class="resize" viewBox="0 0 12 12"><path d="M9 1h2v2H9zM5 5h2v2H5zM9 5h2v2H9zM1 9h2v2H1zM5 9h2v2H5zM9 9h2v2H9z" fill="#b9b5a2" /></svg>
      </footer>
    </div>
  </div>
</template>

<style>
html,
body {
  height: 100%;
  margin: 0;
  overflow: hidden;
  background: #fff;
}
</style>

<style scoped>
.window {
  height: 100vh;
  display: flex;
  flex-direction: column;
  box-sizing: border-box;
  padding: 0 4px 4px;
  background: #0a3fdc;
  box-shadow: inset 1px 0 #0018a8, inset -1px 0 #00128c, inset 0 -1px #00128c;
  border-radius: 7px 7px 0 0;
  overflow: hidden;
  font: 11px/14px "DejaVu Sans Condensed", "DejaVu Sans", sans-serif;
  color: #111;
}
.window * { box-sizing: border-box; }
.defs { position: absolute; width: 0; height: 0; }
.tiny { font: bold 5px "DejaVu Sans", sans-serif; text-anchor: middle; fill: #111; }
.i16 { width: 16px; height: 16px; flex: none; display: block; }
.node-icon { overflow: visible; }
button { font: inherit; color: inherit; border: 0; padding: 0; margin: 0; background: none; flex: none; }
input, textarea, select { font: inherit; color: inherit; margin: 0; border-radius: 0; outline: 0; }
h1, h2, ul { margin: 0; padding: 0; list-style: none; }

.titlebar {
  height: 30px;
  flex: none;
  margin: 0 -4px;
  padding: 2px 6px 0 6px;
  display: flex;
  align-items: center;
  gap: 2px;
  background: linear-gradient(#0a50d0 0, #3d96ff 2px, #0b66f2 5px, #0055e5 9px, #0058ec 18px, #0369ff 26px, #0050d8 29px, #0036b8 30px);
}
.titlebar h1 { flex: 1; margin-left: 1px; font: bold 12px/16px "DejaVu Sans Condensed", "DejaVu Sans", sans-serif; color: #fff; text-shadow: 1px 1px #0a2a88; }
.cap-btn { width: 21px; height: 21px; border: 1px solid #fff; border-radius: 3px; background: linear-gradient(135deg, #7ba2f5, #2c5fe0 40%, #2357d8); }
.cap-btn svg { display: block; width: 19px; height: 19px; }
.close { background: linear-gradient(135deg, #f0a28a, #dc4a22 40%, #c83c14); }

.client { flex: 1; min-height: 0; display: flex; flex-direction: column; background: #f0eefd; }
.menubar { height: 24px; flex: none; display: flex; align-items: center; gap: 12px; padding: 0 6px; background: #eeebdd; }

.toolbars { height: 29px; flex: none; display: flex; align-items: flex-start; gap: 6px; padding: 1px 4px 0; background: #f0edf8; }
.toolbar {
  height: 26px;
  display: flex;
  align-items: center;
  border-radius: 4px;
  overflow: hidden;
  background: linear-gradient(#fbfaf7, #f2f0e6 50%, #dcd9c6 80%, #bdba96 97%, #a9a583);
}
.grip { width: 2px; height: 14px; margin: 0 2px 0 3px; background: repeating-linear-gradient(#bdb9a6 0 2px, transparent 2px 4px); }
.combo { width: 159px; height: 19px; display: flex; align-items: center; background: #fff; margin-right: 4px; }
.combo select { flex: 1; appearance: none; border: 0; background: none; padding: 0 1px; }
.combo-arrow { width: 11px; height: 17px; margin-right: 1px; background: #eeebdd; display: grid; place-items: center; }
.combo-arrow::before { content: ""; border: 3px solid transparent; border-top-color: #111; border-bottom: 0; }
.tool { width: 22px; height: 22px; display: grid; place-items: center; }
.sep { width: 6px; height: 18px; border-left: 1px solid #c8c5b2; background: linear-gradient(90deg, #fff 1px, transparent 1px); }
.cap { width: 11px; align-self: stretch; margin-left: 2px; flex: none; border-radius: 0 4px 4px 0; background: linear-gradient(#edebe0, #d6d4c2 50%, #a29f80); display: grid; place-items: end center; padding-bottom: 3px; }
.cap::before { content: ""; width: 6px; height: 5px; clip-path: polygon(0 0, 100% 0, 100% 20%, 0 20%, 0 40%, 100% 40%, 50% 100%, 0 40%); background: #fff; }
.layout-bar .cap { margin-left: 0; }

.main { flex: 1; min-height: 0; display: flex; }
.nav { width: 239px; flex: none; display: flex; flex-direction: column; background: #fff; border-right: 1px solid #a9b9d3; }
.nav-head { height: 18px; flex: none; display: flex; align-items: center; justify-content: space-between; padding: 2px 0 0 3px; background: linear-gradient(#89abcf, #a2bfdd 50%, #b7d0ec); }
.nav-head h2 { font: inherit; }
.nav-body { flex: 1; min-height: 0; display: flex; padding-top: 1px; }
.nav-tree { flex: 1; min-width: 0; display: flex; flex-direction: column; overflow: hidden; margin-right: 1px; padding: 1px 0 0 25px; }
.nav-tree li { flex: 1; min-height: 0; display: flex; align-items: center; gap: 7px; }
.lv1 { padding-left: 19px; }
.lv2 { padding-left: 38px; }
.lv3 { padding-left: 57px; }
.lv4 { padding-left: 75px; }
.lv5 { padding-left: 94px; }
.nav-item { display: flex; align-items: center; gap: 2px; height: 100%; padding-right: 4px; }
.nav-label { padding-left: 2px; white-space: nowrap; }
.nav-item.sel { background: #3d80b6; color: #fff; }

.exp { position: relative; width: 9px; height: 9px; border: 1px solid #8499b3; border-radius: 1px; background: linear-gradient(135deg, #fff, #d8d4c8); z-index: 1; }
.exp i { position: absolute; left: 1px; top: 3px; width: 5px; height: 1px; background: #111; }
.exp i.vert { left: 3px; top: 1px; width: 1px; height: 5px; }

.vbar { width: 16px; flex: none; display: flex; flex-direction: column; background: linear-gradient(90deg, #f2f1ec, #fdfdf9); }
.vbar button, .hbar button { width: 16px; height: 16px; display: grid; place-items: center; border: 1px solid #b3c6ec; border-radius: 2px; background: linear-gradient(135deg, #e3ecff, #b9ccf5); box-shadow: inset 0 0 0 1px #f2f6ff; }
.vbar svg, .hbar svg { width: 10px; height: 10px; }
.flip svg { transform: rotate(180deg); }
.turn-left svg { transform: rotate(-90deg); }
.turn-right svg { transform: rotate(90deg); }
.thumb { display: grid; place-items: center; border: 1px solid #9db8ec; border-radius: 2px; background: linear-gradient(90deg, #cfdcfd, #bfd0f8); box-shadow: inset 0 0 0 1px #e6eeff; }
.thumb::before { content: ""; width: 7px; height: 8px; background: repeating-linear-gradient(#eef4ff 0 1px, #9cb4e8 1px 2px); }
.gap-a { flex: 35; }
.thumb-a { flex: 296; }
.gap-b { flex: 170; }
.thumb-p { flex: 243; }
.gap-p { flex: 220; }
.hbar { height: 16px; flex: none; display: flex; padding-left: 1px; margin-right: 17px; background: linear-gradient(#f2f1ec, #fdfdf9); }
.hbar .thumb { flex: 160; margin-left: 1px; background: linear-gradient(#cfdcfd, #bfd0f8); }
.hbar .thumb::before { width: 8px; height: 7px; background: repeating-linear-gradient(90deg, #eef4ff 0 1px, #9cb4e8 1px 2px); }
.gap-h { flex: 28; }

.docs { flex: 1; min-width: 0; display: flex; flex-direction: column; padding: 1px 2px 0 7px; }
.doc-tabs { height: 19px; flex: none; display: flex; padding-left: 3px; }
.doc-tab { display: flex; }
.slant { width: 16px; height: 19px; display: block; }
.on-active { background: linear-gradient(90deg, #f0f5fd, transparent); }
.doc-face { height: 19px; display: flex; align-items: center; gap: 5px; padding: 0 6px; border-top: 1px solid #7f9cc0; border-right: 1px solid #7f9cc0; border-radius: 0 3px 0 0; background: linear-gradient(#d9e6f6, #bcd2ec 50%, #a9c5e6); }
.active .doc-face { padding: 0 2px 0 15px; border-color: #c3d3ea; border-right: 0; background: linear-gradient(#fff, #e3edfb); }
.doc-face.av { padding-left: 4px; }
.x { width: 10px; height: 10px; margin-left: 2px; stroke: #111; stroke-width: 1.5; }
.tab-list { margin-left: auto; margin-right: 2px; width: 8px; height: 19px; display: grid; place-items: center; }
.tab-list svg { width: 8px; height: 8px; }

.frame { flex: 1; min-height: 0; display: flex; flex-direction: column; align-items: flex-start; border: 2px solid #c5d5f4; border-bottom-width: 5px; border-radius: 2px; padding: 3px 4px 2px; background: #efedfd; }
.editor-bar { margin-left: 3px; max-width: 100%; }
.text-tool { padding: 0 5px; }
.split { flex: 1; min-height: 0; width: 100%; display: flex; margin-top: 12px; gap: 4px; background: #eeebdd; }
.project { width: 336px; flex: none; display: flex; background: #fff; border: solid #333; border-width: 1px 0 0 2px; border-right: 3px solid #fff; }
.project-tree { flex: 1; min-width: 0; display: flex; flex-direction: column; overflow: hidden; padding-left: 1px; }
.project-tree li { flex: 1; min-height: 0; display: flex; align-items: center; }
.project-tree li:last-child { flex: 0.26; overflow: hidden; align-items: flex-start; }
.guide { position: relative; width: 19px; align-self: stretch; flex: none; display: grid; place-items: center; }
.guide::before { content: ""; position: absolute; left: 9px; top: 0; bottom: 0; width: 1px; }
.gt::before, .gb::before { background: repeating-linear-gradient(#a8a8a8 0 1px, transparent 1px 2px); }
.gt:not(.gb)::before { bottom: 50%; }
.gb:not(.gt)::before { top: 50%; }
.gh::after { content: ""; position: absolute; left: 9px; right: 0; top: 50%; height: 1px; background: repeating-linear-gradient(90deg, #a8a8a8 0 1px, transparent 1px 2px); }
.project-label { margin-left: 3px; padding: 0 3px 0 2px; line-height: 16px; white-space: nowrap; }
.project-label.sel { background: #eeebdd; }

.workspace { flex: 1; min-width: 0; display: flex; flex-direction: column; gap: 3px; border-right: 2px solid #fff; }
.props { height: 250px; flex: none; display: flex; flex-direction: column; padding: 8px 0 10px 6px; overflow: hidden; background: #eeebdd; border: solid #4d4b45; border-width: 2px 0 0 2px; box-shadow: 0 1px #fff; }
.page-tabs { height: 21px; flex: none; display: flex; align-items: flex-end; gap: 2px; }
.page-tabs button { height: 19px; padding: 0 3px; border: 1px solid #93a4ad; border-bottom: 0; border-radius: 3px 3px 0 0; background: linear-gradient(#fff, #f3f2ec); white-space: nowrap; }
.page-tabs .on { height: 22px; padding: 0 6px 3px; margin: 0 -2px -1px 0; border-top: 2px solid #f0a630; background: #fdfdfc; z-index: 1; }
.page-body { flex: 1; min-height: 0; display: flex; flex-direction: column; padding: 11px 0 13px 14px; border: 1px solid #93a4ad; border-right: 0; background: #fcfcfb; }
.line { display: flex; align-items: center; height: 20px; flex: none; white-space: nowrap; }
.line > * { flex: none; }
.line input { height: 20px; border: 1px solid #7f9db9; background: #fff; padding: 0 4px; }
.line input.sunk { border: solid #77736a; border-width: 2px 0 0 2px; border-right: 1px solid #e8e6dc; border-bottom: 1px solid #e8e6dc; background: #fdfdfc; }
.l-name { width: 34px; padding-left: 2px; }
.line .f-name { width: 142px; }
.l-type { width: 33px; padding-left: 5px; }
.line .f-type { width: 112px; text-align: center; }
.l-uid { width: 36px; padding-left: 10px; }
.line .f-cut { width: 80px; padding-left: 7px; }
.line .mem { padding-left: 11px; }
.second { margin-top: 3px; height: 24px; align-items: flex-start; }
.l-com { width: 161px; align-self: flex-end; }
.l-mem { width: 196px; line-height: 16px; }
.page-body textarea { flex: 1; min-height: 0; resize: none; border: 1px solid #7f9db9; border-right: 0; background: #fff; padding: 4px; }

.preview { flex: 1; min-height: 0; margin-bottom: 2px; border: solid #222; border-width: 1px 0 0 2px; background: #848284; overflow: hidden; }
.device { width: 317px; display: flex; flex-direction: column; background: #a3a1a4; padding-top: 12px; }
.screen { width: 270px; height: 169px; margin-left: 24px; display: flex; background: #fff; padding: 14px 0 0 27px; gap: 29px; }
.blind { width: 105px; height: 137px; flex: none; }
.keys { display: grid; grid-template-columns: 40px 40px; grid-auto-rows: 40px; gap: 9px 10px; }
.keys button { background: #271c54; color: #fff; font: bold 12px/14px "Liberation Sans", Arial, sans-serif; }
.keys svg { display: block; width: 40px; height: 40px; }
.modes { display: flex; height: 45px; margin-top: 12px; padding: 0 3px 0 4px; background: #fff; }
.modes button { flex: 1; min-width: 0; background: #271c54; color: #ffff00; border: solid #ffff00; border-width: 2px 1px 0; box-shadow: inset 0 -1px #111; }
.modes .first { color: #fff; border-color: #fff; }
.modes svg { display: block; width: 48px; height: 42px; margin: auto; }

.status { height: 23px; flex: none; display: flex; align-items: center; padding: 0 2px 0 6px; background: #eeebdd; border-top: 1px solid #d3d0bf; }
.link { width: 12px; height: 2px; background: #4fce4b; }
.db { width: 10px; height: 14px; }
.bar { width: 1px; height: 15px; margin: 0 5px; background: #85827a; }
.push { margin-left: auto; }
.welcome { margin-right: 12px; }
.resize { width: 12px; height: 12px; align-self: flex-end; }
</style>
